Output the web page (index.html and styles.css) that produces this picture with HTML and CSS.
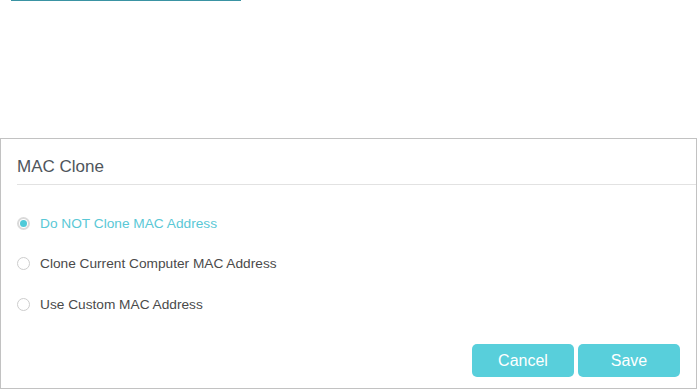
FILE: index.html
```html
<!DOCTYPE html>
<html>
<head>
<meta charset="utf-8">
<link rel="stylesheet" href="styles.css">
</head>
<body>
<div class="tabline"></div>
<div class="panel">
  <div class="panel-title">MAC Clone</div>
  <div class="options">
    <label class="option selected"><span class="radio"><span class="dot"></span></span><span class="label">Do NOT Clone MAC Address</span></label>
    <label class="option"><span class="radio"></span><span class="label">Clone Current Computer MAC Address</span></label>
    <label class="option"><span class="radio"></span><span class="label">Use Custom MAC Address</span></label>
  </div>
  <div class="actions">
    <button class="btn btn-cancel">Cancel</button>
    <button class="btn btn-save">Save</button>
  </div>
</div>
</body>
</html>
```
FILE: styles.css
```css
html, body {
  margin: 0;
  padding: 0;
  background: #fff;
  font-family: "Liberation Sans", Arial, sans-serif;
}
.tabline {
  margin-left: 11px;
  width: 230px;
  height: 1px;
  background: #3a93a3;
}
.panel {
  margin-top: 137px;
  width: 697px;
  height: 251px;
  box-sizing: border-box;
  border: 1px solid #c2c2c2;
  display: flex;
  flex-direction: column;
}
.panel-title {
  margin-left: 16px;
  padding-top: 18px;
  padding-bottom: 7px;
  font-size: 17px;
  line-height: 20px;
  color: #4f565c;
  border-bottom: 1px solid #e2e2e2;
}
.options {
  margin-top: 18px;
  display: flex;
  flex-direction: column;
}
.option {
  height: 40.5px;
  display: flex;
  align-items: center;
  padding-left: 16px;
  font-size: 13.7px;
  color: #4a4a4a;
}
.option.selected {
  color: #5ac8d6;
}
.radio {
  width: 13px;
  height: 13px;
  box-sizing: border-box;
  border: 1px solid #cdcdcd;
  border-radius: 50%;
  background: #fff;
  display: flex;
  align-items: center;
  justify-content: center;
  margin-right: 10px;
  flex: none;
}
.option.selected .radio {
  border: 2px solid #dadada;
}
.dot {
  width: 7px;
  height: 7px;
  border-radius: 50%;
  background: #4fcad8;
}
.actions {
  margin-top: auto;
  display: flex;
  justify-content: flex-end;
  gap: 4px;
  padding-right: 16px;
  padding-bottom: 11px;
}
.btn {
  width: 102px;
  height: 33px;
  border: none;
  border-radius: 5px;
  background: #58cfdb;
  color: #fff;
  font-family: "Liberation Sans", Arial, sans-serif;
  font-size: 16px;
  padding: 0;
}
```
